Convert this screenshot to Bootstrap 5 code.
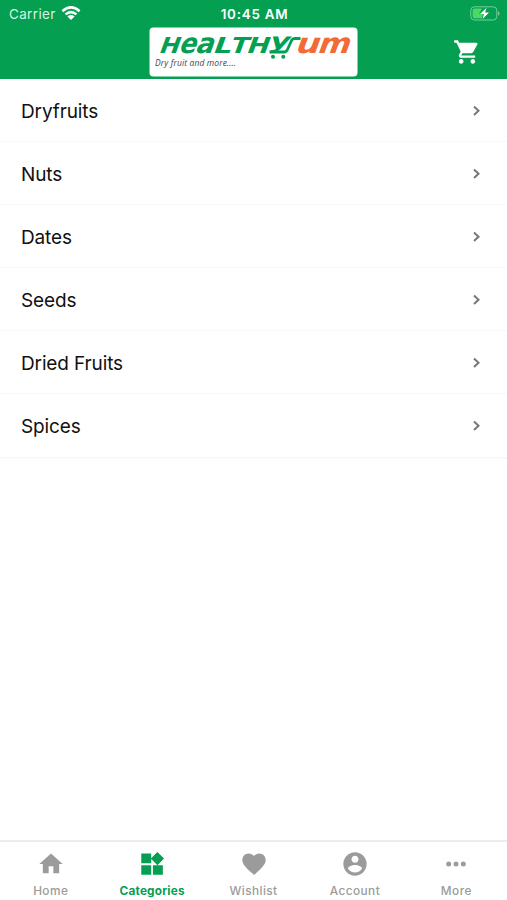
<!DOCTYPE html>
<html lang="en">
<head>
<meta charset="utf-8">
<meta name="viewport" content="width=device-width, initial-scale=1">
<title>Healthyum – Categories</title>
<link href="https://cdn.jsdelivr.net/npm/bootstrap@5.3.0/dist/css/bootstrap.min.css" rel="stylesheet">
<style>
  body { font-family: Inter, "Liberation Sans", sans-serif; color: #111; }
  svg { display: block; }
  .app-header { background: #059f52; height: 79px; }
  .status-bar { height: 27px; font-size: 13.4px; line-height: 28px; padding: 0 7px 0 9px; }
  .status-side { width: 100px; letter-spacing: .4px; }
  .carrier { color: #d5f5e2; gap: 5px; }
  .status-time { font-weight: 600; letter-spacing: .75px; padding-top: 1px; }
  .brand-row { height: 50px; padding: 0 26px; }
  .side-slot { width: 28px; }
  .wordmark { font-family: "DejaVu Sans", sans-serif; font-weight: 700; fill: #059f52; }
  .category-item { height: 63.1px; padding: 1px 24px 0 21px; font-size: 19px; border: 0; border-bottom: 1px solid #f8f8f8; color: #111; letter-spacing: -.13px; }
  .category-item span { padding-top: 3px; }
  .tab-bar { height: 60px; border-top: 2px solid #ececec; }
  .tab-link { padding: 8px 0 0; color: #9b9b9b; font-size: 11.8px; line-height: 16px; font-weight: 500; letter-spacing: .45px; }
  .tab-link svg { margin-bottom: 5px; }
  .tab-link.active { color: #059f52; font-weight: 700; letter-spacing: .2px; }
</style>
<script src="https://cdn.jsdelivr.net/npm/bootstrap@5.3.0/dist/js/bootstrap.bundle.min.js"></script>
</head>
<body class="bg-white">
<div class="d-flex flex-column vh-100 overflow-hidden">
  <header class="app-header flex-shrink-0 text-white">
    <div class="status-bar d-flex justify-content-between align-items-center">
      <div class="status-side carrier d-flex align-items-center"><span>Carrier</span>
        <svg width="20" height="15" viewBox="0 0 20 15" fill="none" stroke="#fff" stroke-width="2.5"><path d="M1.400 5.200Q10-2.400 18.600 5.200M4.500 8.400Q10 3.800 15.500 8.400"/><path d="M6.400 10.400Q10 7.600 13.600 10.400L10 14z" fill="#fff" stroke="none"/></svg>
      </div>
      <div class="status-time">10:45 AM</div>
      <div class="status-side d-flex justify-content-end">
        <svg width="30" height="15" viewBox="0 0 30 15"><rect x=".8" y=".8" width="26" height="13.200" rx="3.600" fill="none" stroke="#79cca0"/><path d="M4.500 2.600H12L9 8h4l-1 4.200H4.500Q2.600 12.200 2.600 10.300V4.500Q2.600 2.600 4.500 2.600z" fill="#4bd964"/><path d="M28 5q3 2.400 0 4.800z" fill="#79cca0"/><path d="M16.600 1.800L10 8h4l-1.400 5L19 6.600h-4z" fill="#fff"/></svg>
      </div>
    </div>
    <div class="brand-row d-flex justify-content-between align-items-center">
      <span class="side-slot"></span>
      <svg width="209" height="50" viewBox="149.500 27 209 50">
        <rect x="150" y="27.500" width="208" height="49" rx="4" fill="#fff"/>
        <g transform="translate(0 52.800) skewX(-20)" class="wordmark">
          <text x="158.500" y="0" font-size="22" textLength="20" lengthAdjust="spacingAndGlyphs">H</text>
          <text x="178.500" y="0" font-size="28" textLength="17" lengthAdjust="spacingAndGlyphs">e</text>
          <text x="195" y="0" font-size="28" textLength="18" lengthAdjust="spacingAndGlyphs">a</text>
          <text x="212.500" y="0" font-size="22" textLength="18" lengthAdjust="spacingAndGlyphs">L</text>
          <text x="229" y="0" font-size="22" textLength="18" lengthAdjust="spacingAndGlyphs">T</text>
          <text x="246" y="0" font-size="22" textLength="22" lengthAdjust="spacingAndGlyphs">H</text>
          <text x="267" y="-4.600" font-size="21" textLength="20" lengthAdjust="spacingAndGlyphs">y</text>
          <text x="294.500" y="0" font-size="28" textLength="24" lengthAdjust="spacingAndGlyphs" fill="#f26a35">u</text>
          <text x="317" y="0" font-size="28" textLength="32" lengthAdjust="spacingAndGlyphs" fill="#f26a35">m</text>
        </g>
        <path d="M270 52H284.500Q287 52 288 49.500L292 40.500Q293 38.500 295 38.500H301" fill="none" stroke="#059f52" stroke-width="2.800"/>
        <g fill="#059f52"><circle cx="273.500" cy="56.800" r="2"/><circle cx="283.800" cy="56.800" r="2"/></g>
        <text x="155.500" y="66" font-family="Open Sans, sans-serif" font-style="italic" font-size="8.500" fill="#444" textLength="81">Dry fruit and more....</text>
      </svg>
      <svg class="side-slot" width="28" height="28" viewBox="0 0 24 24" fill="#fff"><path d="M7 18c-1.100 0-1.990.9-1.990 2S5.900 22 7 22s2-.9 2-2-.9-2-2-2zM1 2v2h2l3.600 7.590-1.350 2.450c-.16.28-.25.61-.25.96 0 1.100.9 2 2 2h12v-2H7.420c-.14 0-.25-.11-.25-.25l.03-.12.9-1.630h7.450c.75 0 1.410-.41 1.750-1.030l3.580-6.490A1 1 0 0 0 20 4H5.210l-.94-2H1zm16 16c-1.100 0-1.990.9-1.990 2s.89 2 1.990 2 2-.9 2-2-.9-2-2-2z"/></svg>
    </div>
  </header>

  <main class="list-group list-group-flush flex-grow-1">
    <a href="#" class="list-group-item category-item d-flex align-items-center justify-content-between"><span>Dryfruits</span><svg width="12" height="14" viewBox="0 0 12 14" fill="none" stroke="#777" stroke-width="2"><path d="M3 2.500L7.500 6.700l-4.500 4.200"/></svg></a>
    <a href="#" class="list-group-item category-item d-flex align-items-center justify-content-between"><span>Nuts</span><svg width="12" height="14" viewBox="0 0 12 14" fill="none" stroke="#777" stroke-width="2"><path d="M3 2.500L7.500 6.700l-4.500 4.200"/></svg></a>
    <a href="#" class="list-group-item category-item d-flex align-items-center justify-content-between"><span>Dates</span><svg width="12" height="14" viewBox="0 0 12 14" fill="none" stroke="#777" stroke-width="2"><path d="M3 2.500L7.500 6.700l-4.500 4.200"/></svg></a>
    <a href="#" class="list-group-item category-item d-flex align-items-center justify-content-between"><span>Seeds</span><svg width="12" height="14" viewBox="0 0 12 14" fill="none" stroke="#777" stroke-width="2"><path d="M3 2.500L7.500 6.700l-4.500 4.200"/></svg></a>
    <a href="#" class="list-group-item category-item d-flex align-items-center justify-content-between"><span>Dried Fruits</span><svg width="12" height="14" viewBox="0 0 12 14" fill="none" stroke="#777" stroke-width="2"><path d="M3 2.500L7.500 6.700l-4.500 4.200"/></svg></a>
    <a href="#" class="list-group-item category-item d-flex align-items-center justify-content-between border-bottom-1"><span>Spices</span><svg width="12" height="14" viewBox="0 0 12 14" fill="none" stroke="#777" stroke-width="2"><path d="M3 2.500L7.500 6.700l-4.500 4.200"/></svg></a>
    <div class="border-top border-light"></div>
  </main>

  <nav class="nav nav-fill flex-nowrap tab-bar flex-shrink-0">
    <a href="#" class="nav-link tab-link w-25 d-flex flex-column align-items-center"><svg width="28" height="28" viewBox="0 0 24 24" fill="currentColor"><path d="M10 20v-6h4v6h5v-8h3L12 3 2 12h3v8z"/></svg>Home</a>
    <a href="#" class="nav-link tab-link active w-25 d-flex flex-column align-items-center"><svg width="28" height="28" viewBox="0 0 24 24" fill="currentColor"><path d="M12.800 13v8.300h8.500V13zM2.800 21.300h8.500V13H2.800zM2.800 3v8.300h8.500V3zm13.860-1.310L11 7.340 16.660 13l5.660-5.660-5.660-5.650z"/></svg>Categories</a>
    <a href="#" class="nav-link tab-link w-25 d-flex flex-column align-items-center"><svg width="28" height="28" viewBox="0 0 24 24" fill="currentColor"><path d="M12 21.350l-1.450-1.320C5.400 15.360 2 12.280 2 8.500 2 5.420 4.420 3 7.500 3c1.740 0 3.410.81 4.500 2.090C13.090 3.810 14.760 3 16.500 3 19.580 3 22 5.420 22 8.500c0 3.780-3.400 6.860-8.550 11.540L12 21.350z"/></svg>Wishlist</a>
    <a href="#" class="nav-link tab-link w-25 d-flex flex-column align-items-center"><svg width="28" height="28" viewBox="0 0 24 24" fill="currentColor"><path d="M12 2C6.480 2 2 6.480 2 12s4.480 10 10 10 10-4.480 10-10S17.520 2 12 2zm0 3c1.660 0 3 1.340 3 3s-1.340 3-3 3-3-1.340-3-3 1.340-3 3-3zm0 14.200c-2.500 0-4.710-1.280-6-3.220.03-1.990 4-3.080 6-3.080 1.990 0 5.970 1.090 6 3.080-1.290 1.940-3.500 3.220-6 3.220z"/></svg>Account</a>
    <a href="#" class="nav-link tab-link w-25 d-flex flex-column align-items-center"><svg width="28" height="28" viewBox="0 0 28 28" fill="currentColor"><circle cx="6.700" cy="14" r="2.500"/><circle cx="14" cy="14" r="2.500"/><circle cx="21.300" cy="14" r="2.500"/></svg>More</a>
  </nav>
</div>
</body>
</html>
